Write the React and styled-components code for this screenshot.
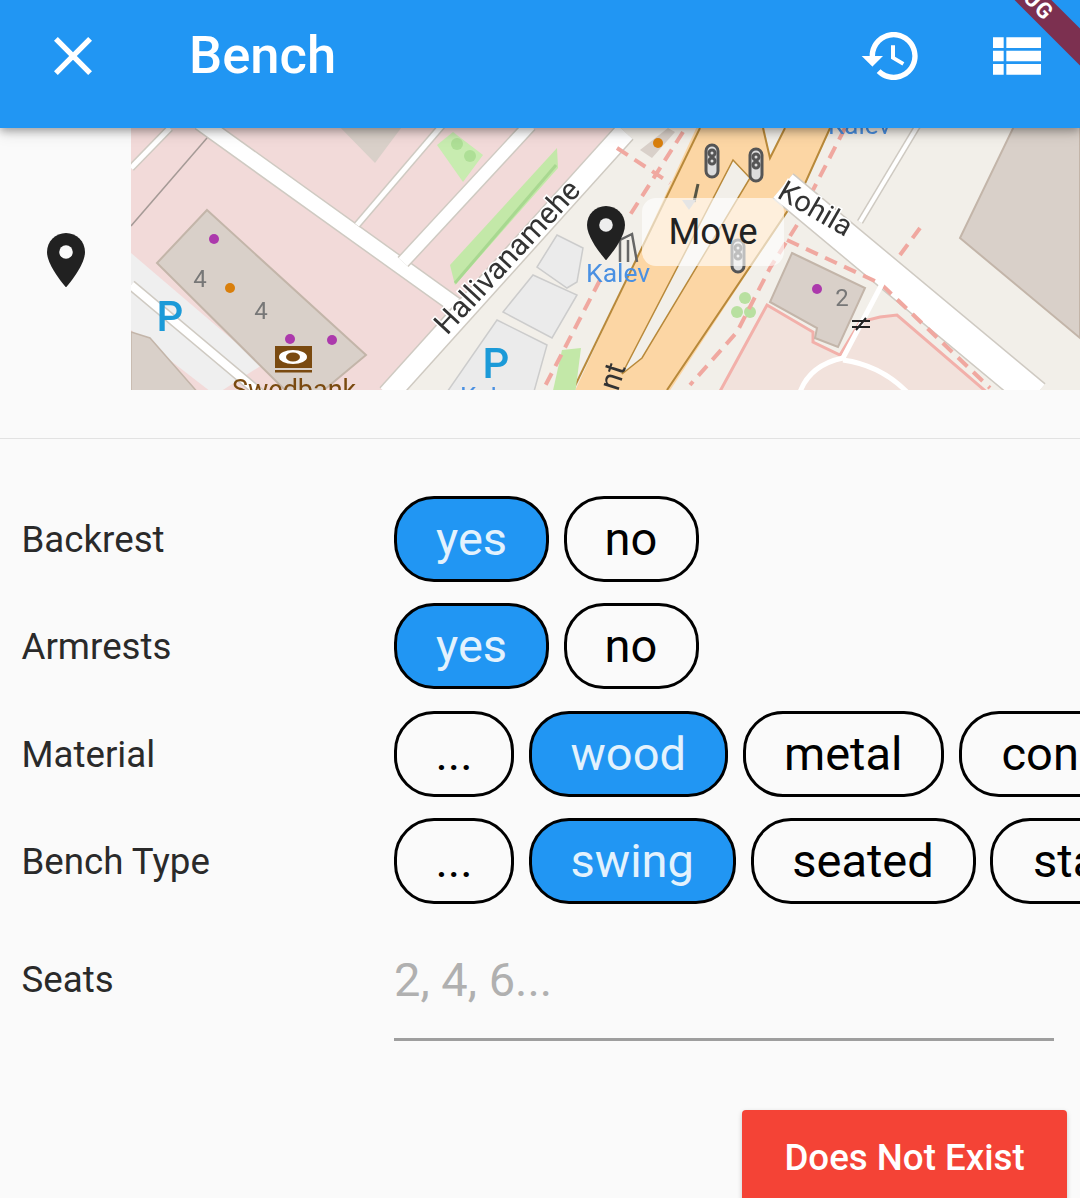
import React from "react";
import styled, { createGlobalStyle } from "styled-components";

const Global = createGlobalStyle`
  html, body { margin: 0; padding: 0; background: #fafafa; }
  body { font-family: Roboto, "Liberation Sans", sans-serif; }
`;
const Page = styled.div`
  width: 1080px; height: 1198px; overflow: hidden; position: relative;
  background: #fafafa; display: flex; flex-direction: column;
`;
const AppBar = styled.header`
  height: 128px; flex: none; background: #2196f3; position: relative; z-index: 2;
  display: flex; align-items: center; padding: 0 39px 16px 54px; box-sizing: border-box;
  box-shadow: 0 3px 8px rgba(0,0,0,.3), 0 6px 14px rgba(0,0,0,.1);
`;
const BannerClip = styled.div`
  position: absolute; inset: 0; overflow: hidden; pointer-events: none;
`;
const Title = styled.h1`
  margin: -2px 0 0 97px; flex: 1; color: #fff; font: 500 52.5px/60px Roboto, sans-serif;
`;
const BarIcon = styled.svg`
  width: ${p => p.$w}px; height: ${p => p.$w}px; fill: #fff; display: block; flex: none;
  margin-left: ${p => p.$ml || 0}px;
`;
const Banner = styled.div`
  position: absolute; top: -23px; right: -73px; width: 260px; height: 26px;
  background: rgba(127, 44, 74, .97); transform: rotate(45deg); color: #fff;
  font: 700 22px/26px Roboto, sans-serif; text-align: center; letter-spacing: 1px;
`;
const MapRow = styled.section`
  display: flex; height: 262px; flex: none;
`;
const PinCell = styled.div`
  width: 131px; flex: none; display: flex; justify-content: center; box-sizing: border-box;
  padding-top: 105px;
`;
const MapBox = styled.div`
  flex: 1; position: relative; overflow: hidden; background: #f2efe9;
`;
const MapSvg = styled.svg`display: block; width: 949px; height: 262px; filter: blur(.6px);`;
const MoveLabel = styled.div`
  position: absolute; left: 511px; top: 70px; width: 142px; height: 68px; border-radius: 14px;
  background: rgba(255,255,255,.62); display: flex; align-items: center; justify-content: center;
  color: #222; font: 400 36.5px/42px Roboto, sans-serif;
`;
const Divider = styled.hr`
  margin: 48px 0 0; height: 1px; border: 0; background: #e2e2e2; flex: none;
`;
const Form = styled.div`
  display: flex; flex-direction: column; padding-top: 57px; gap: 21.3px;
`;
const Row = styled.div`
  display: flex; align-items: center; height: 86px; overflow: hidden; white-space: nowrap;
`;
const Label = styled.div`
  width: 394px; flex: none; padding: 2px 0 0 21.5px; box-sizing: border-box; color: #2a2a2a;
  font: 400 36.7px/42px Roboto, sans-serif;
`;
const Chips = styled.div`display: flex; gap: 14.5px; flex: none;`;
const Chip = styled.div`
  height: 86px; box-sizing: border-box; border: 3px solid #000; border-radius: 40px;
  width: ${p => p.$w}px; flex: none; display: flex; align-items: center;
  background: ${p => (p.$on ? "#2196f3" : "transparent")};
  color: ${p => (p.$on ? "#e3f2fd" : "#000")};
  font: 400 47px/54px Roboto, sans-serif;
  padding: 0 ${p => (p.$cut ? "40px" : "0")}; justify-content: ${p => (p.$cut ? "flex-start" : "center")};
`;
const SeatsRow = styled.div`
  display: flex; align-items: flex-start; margin-top: 22px; height: 115px; flex: none;
`;
const SeatsLabel = styled(Label)`padding-top: 33px;`;
const SeatsField = styled.div`
  width: 660px; height: 115px; box-sizing: border-box; border-bottom: 3px solid #9e9e9e;
  color: #b0b0b0; font: 400 47px/54px Roboto, sans-serif; padding-top: 27px;
`;
const Footer = styled.div`
  display: flex; justify-content: flex-end; padding: 69px 13px 0 0;
`;
const RedButton = styled.button`
  width: 325px; height: 96px; border: 0; background: #f44336; color: #fff; border-radius: 4px;
  font: 500 36.7px/42px Roboto, sans-serif; padding: 0;
  box-shadow: 0 2px 5px rgba(0,0,0,.2);
`;

const Road = ({ d, w = 22, c = "#fff", o = "#cfcac2" }) => (
  <>
    <path d={d} stroke={o} strokeWidth={w + 3} fill="none" />
    <path d={d} stroke={c} strokeWidth={w} fill="none" />
  </>
);
const Dash = ({ d }) => (
  <path d={d} stroke="#f0a8a0" strokeWidth="4" strokeDasharray="13 8" fill="none" />
);
const Dot = ({ x, y, c = "#ac39ac" }) => <circle cx={x} cy={y} r="5" fill={c} />;
const Light = ({ x, y, s = "#555", f = "#ddd" }) => (
  <g fill="none" stroke={s} strokeWidth="3">
    <rect x={x - 6} y={y - 16} width="12" height="32" rx="6" fill={f} />
    <circle cx={x} cy={y - 8} r="3" /><circle cx={x} cy={y} r="3" /><circle cx={x} cy={y + 8} r="3" />
  </g>
);

const MapDrawing = () => (
  <MapSvg viewBox="131 128 949 262">
    <rect x="131" y="128" width="949" height="262" fill="#f2efe9" />
    {/* pink landuse */}
    <polygon points="131,120 620,120 380,395 131,395" fill="#f2dad9" />
    <polygon points="767,305 813,332 813,342 840,355 860,322 880,317 897,315 990,395 718,395" fill="#f2e2dc" stroke="#f2b0aa" strokeWidth="3" />
    {/* lower-left parking strip */}
    <polygon points="131,253 262,365 215,395 131,330" fill="#efefef" />
    <polygon points="131,332 150,338 200,395 131,395" fill="#d9d0c9" stroke="#c3b5a9" strokeWidth="1.5" />
    {/* trunk road */}
    <polygon points="700,120 835,120 803,188 667,395 573,395" fill="#fcd6a4" />
    <polygon points="763,120 770,158 790,120" fill="#f2efe9" />
    <g stroke="#b8893a" strokeWidth="2" fill="none">
      <path d="M700,128 L573,390" /><path d="M830,128 L803,188 L667,390" />
      <path d="M763,128 L770,158 L785,128" />
    </g>
    <polygon points="733,160 750,178 642,358 622,374" fill="#f2efe9" stroke="#b8893a" strokeWidth="1.5" />
    {/* white streets */}
    <Road d="M200,122 L455,305" w={15} />
    <Road d="M131,168 L170,128" w={5} />
    <path d="M131,226 L207,138" stroke="#a59a96" strokeWidth="1.5" fill="none" />
    <Road d="M357,225 L445,122" w={5} />
    <Road d="M403,262 L530,125" w={12} />
    <Road d="M388,395 L625,132" w={20} />
    <Road d="M131,285 L262,395" w={8} />
    <Road d="M783,186 L1035,396" w={30} />
    <Road d="M860,222 L920,122" w={4} />
    {/* buildings */}
    <polygon points="207,210 366,355 318,395 290,395 157,263" fill="#d9d0c9" stroke="#c3b5a9" strokeWidth="2" />
    <polygon points="792,253 865,288 838,347 815,338 817,328 770,302" fill="#d9d0c9" stroke="#c3b5a9" strokeWidth="2" />
    <polygon points="1017,120 1080,120 1080,338 960,238" fill="#d9d0c9" stroke="#c3b5a9" strokeWidth="2" />
    <polygon points="333,120 407,120 375,163" fill="#d9d0c9" />
    <polygon points="640,150 668,128 675,132 652,158" fill="#d9d0c9" />
    {/* parking lots */}
    <polygon points="557,235 583,248 577,282 567,288 537,267" fill="#ebebeb" stroke="#ccc" strokeWidth="1.5" />
    <polygon points="533,275 577,295 552,338 503,312" fill="#ebebeb" stroke="#ccc" strokeWidth="1.5" />
    <polygon points="497,320 547,345 533,395 445,395" fill="#ebebeb" stroke="#ccc" strokeWidth="1.5" />
    {/* green */}
    <polygon points="450,265 557,148 558,168 455,285" fill="#c3e8a8" />
    <path d="M455,283 L556,165" stroke="#a8d890" strokeWidth="3" />
    <polygon points="437,145 453,132 483,155 463,182" fill="#c8ecb0" />
    <circle cx="457" cy="144" r="6" fill="#aedf96" /><circle cx="470" cy="156" r="6" fill="#aedf96" />
    <polygon points="552,395 562,350 581,348 575,395" fill="#c3e8a8" />
    <circle cx="745" cy="298" r="6" fill="#b8e0a0" /><circle cx="737" cy="312" r="6" fill="#b8e0a0" /><circle cx="750" cy="312" r="6" fill="#b8e0a0" />
    {/* footways */}
    <Dash d="M683,132 L630,215" />
    <Dash d="M600,280 L543,390" />
    <Dash d="M617,148 L670,183" />
    <Dash d="M845,128 L813,190" />
    <Dash d="M797,225 L770,268 L737,332 L690,385" />
    <Dash d="M787,240 L877,282" />
    <Dash d="M882,285 L990,388" />
    <Dash d="M900,255 L920,228" />
    {/* footpath */}
    <path d="M883,282 L843,358 Q810,365 800,392 M843,360 Q880,365 907,392" stroke="#fff" strokeWidth="5" fill="none" />
    <path d="M852,321 H870 M852,327 H870 M856,330 L866,318" stroke="#222" strokeWidth="2" />
    {/* pois */}
    <Dot x="214" y="239" /><Dot x="230" y="288" c="#d97f0c" /><Dot x="290" y="339" /><Dot x="332" y="340" /><Dot x="817" y="289" />
    <Dot x="658" y="143" c="#d97f0c" />
    <Light x="712" y="161" /><Light x="756" y="165" /><Light x="738" y="256" />
    <path d="M694,202 L698,184" stroke="#554" strokeWidth="3" />
    <polygon points="682,200 696,200 689,210" fill="#bbb" />
    <g>
      <rect x="275" y="346" width="37" height="22" fill="#7a4a10" />
      <ellipse cx="293" cy="357" rx="14" ry="7" fill="#fff" />
      <ellipse cx="293" cy="357" rx="7" ry="4.5" fill="#7a4a10" />
      <rect x="275" y="370" width="37" height="2.5" fill="#7a4a10" />
    </g>
    <g fontFamily="Roboto, sans-serif">
      <text x="200" y="287" fontSize="24" fill="#777" textAnchor="middle">4</text>
      <text x="261" y="319" fontSize="24" fill="#777" textAnchor="middle">4</text>
      <text x="842" y="306" fontSize="24" fill="#777" textAnchor="middle">2</text>
      <text x="170" y="331" fontSize="42" fontWeight="500" fill="#1b9ad8" textAnchor="middle">P</text>
      <text x="496" y="378" fontSize="42" fontWeight="500" fill="#1b9ad8" textAnchor="middle">P</text>
      <text x="232" y="399" fontSize="27" fill="#7a4a10">Swedbank</text>
      <text x="460" y="406" fontSize="26" fill="#4a90e2">Kalev</text>
      <text x="586" y="282" fontSize="26.5" fill="#4a90e2">Kalev</text>
      <text x="828" y="134" fontSize="26" fill="#4a90e2">Kalev</text>
      <text x="0" y="0" fontSize="30" fill="#333" stroke="#fff" strokeWidth="3" paintOrder="stroke" transform="translate(447,336) rotate(-47)">Hallivanamehe</text>
      <text x="0" y="0" fontSize="29" fill="#333" stroke="#fff" strokeWidth="3" paintOrder="stroke" transform="translate(776,197) rotate(30)">Kohila</text>
      <text x="0" y="0" fontSize="30" fill="#333" transform="translate(618,392) rotate(-72)">nt</text>
    </g>
    <g fill="none" stroke="#666" strokeWidth="2.5">
      <path d="M620,262 V240 L632,234 L637,262 M628,240 V262" />
    </g>
  </MapSvg>
);

const Pin = ({ size = 38, hole = "#fff" }) => (
  <svg width={size} height={(size * 20) / 14} viewBox="5 2 14 20" style={{ display: "block" }}>
    <path d="M12 2C8.13 2 5 5.13 5 9c0 5.25 7 13 7 13s7-7.75 7-13c0-3.87-3.13-7-7-7z" fill="#212121" />
    <circle cx="12" cy="9" r="2.5" fill={hole} />
  </svg>
);
const PinOverlay = styled.div`position: absolute; left: 456px; top: 78px;`;

const ROWS = [
  { label: "Backrest", chips: [["yes", 155, 1], ["no", 135]] },
  { label: "Armrests", chips: [["yes", 155, 1], ["no", 135]] },
  { label: "Material", chips: [["...", 120], ["wood", 199.5, 1], ["metal", 201.5], ["concrete", 260, 0, 1]] },
  { label: "Bench Type", chips: [["...", 120], ["swing", 207.5, 1], ["seated", 225], ["stainless", 260, 0, 1]] },
];

export default function App() {
  return (
    <Page>
      <Global />
      <AppBar>
        <BarIcon $w={38} viewBox="5 5 14 14"><path d="M19 6.41 17.59 5 12 10.59 6.41 5 5 6.41 10.59 12 5 17.59 6.41 19 12 13.41 17.59 19 19 17.59 13.41 12z" /></BarIcon>
        <Title>Bench</Title>
        <BarIcon $w={64} viewBox="0 0 24 24"><path d="M13 3c-4.97 0-9 4.03-9 9H1l3.89 3.89.07.14L9 12H6c0-3.87 3.13-7 7-7s7 3.13 7 7-3.13 7-7 7c-1.93 0-3.68-.79-4.94-2.06l-1.42 1.42C8.27 19.99 10.51 21 13 21c4.97 0 9-4.03 9-9s-4.03-9-9-9zm-1 5v5l4.28 2.54.72-1.21-3.5-2.08V8H12z" /></BarIcon>
        <BarIcon $w={48} $ml={70} viewBox="3 3 18 18"><path d="M3 14h4v-4H3v4zm0 5h4v-4H3v4zM3 9h4V5H3v4zm5 5h13v-4H8v4zm0 5h13v-4H8v4zM8 5v4h13V5H8z" /></BarIcon>
        <BannerClip><Banner>DEBUG</Banner></BannerClip>
      </AppBar>
      <MapRow>
        <PinCell><Pin hole="#fafafa" /></PinCell>
        <MapBox>
          <MapDrawing />
          <PinOverlay><Pin hole="#eee" /></PinOverlay>
          <MoveLabel>Move</MoveLabel>
        </MapBox>
      </MapRow>
      <Divider />
      <Form>
        {ROWS.map(r => (
          <Row key={r.label}>
            <Label>{r.label}</Label>
            <Chips>
              {r.chips.map(([t, w, on, cut]) => (
                <Chip key={t} $w={w} $on={!!on} $cut={!!cut}>{t}</Chip>
              ))}
            </Chips>
          </Row>
        ))}
      </Form>
      <SeatsRow>
        <SeatsLabel>Seats</SeatsLabel>
        <SeatsField>2, 4, 6...</SeatsField>
      </SeatsRow>
      <Footer><RedButton>Does Not Exist</RedButton></Footer>
    </Page>
  );
}
